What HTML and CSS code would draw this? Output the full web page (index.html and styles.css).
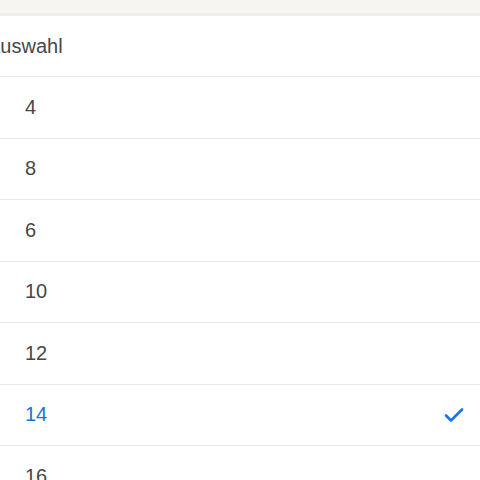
FILE: index.html
```html
<!DOCTYPE html>
<html lang="de">
<head>
<meta charset="utf-8">
<link rel="stylesheet" href="styles.css">
</head>
<body>
<div class="topbar"></div>
<ul class="list">
  <li class="row header"><span class="label cut">Auswahl</span></li>
  <li class="row"><span class="label">4</span></li>
  <li class="row"><span class="label">8</span></li>
  <li class="row"><span class="label">6</span></li>
  <li class="row"><span class="label">10</span></li>
  <li class="row"><span class="label">12</span></li>
  <li class="row selected"><span class="label">14</span>
    <svg class="check" width="20" height="16" viewBox="0 0 20 16"><path d="M2 8.5 L7 13.5 L18 2.5" fill="none" stroke="currentColor" stroke-width="2.6" stroke-linecap="round" stroke-linejoin="round"/></svg>
  </li>
  <li class="row"><span class="label">16</span></li>
</ul>
</body>
</html>
```
FILE: styles.css
```css
html, body {
  margin: 0;
  padding: 0;
  background: #ffffff;
  overflow: hidden;
  height: 480px;
}
body {
  font-family: "Liberation Sans", Arial, sans-serif;
  color: #474747;
}
.topbar {
  height: 13px;
  background: #f6f5f1;
  border-bottom: 3px solid #efeeea;
}
.list {
  list-style: none;
  margin: 0;
  padding: 0;
}
.row {
  box-sizing: border-box;
  height: 61.5px;
  border-bottom: 1px solid #e8e8e8;
  display: flex;
  align-items: center;
  justify-content: space-between;
  padding: 0 16px 0 25px;
  font-size: 20px;
}
.header {
  height: 61px;
}
.cut {
  margin-left: -38px;
}
.selected {
  color: #1b72d6;
}
.check {
  color: #1a73e8;
  display: block;
}
```
